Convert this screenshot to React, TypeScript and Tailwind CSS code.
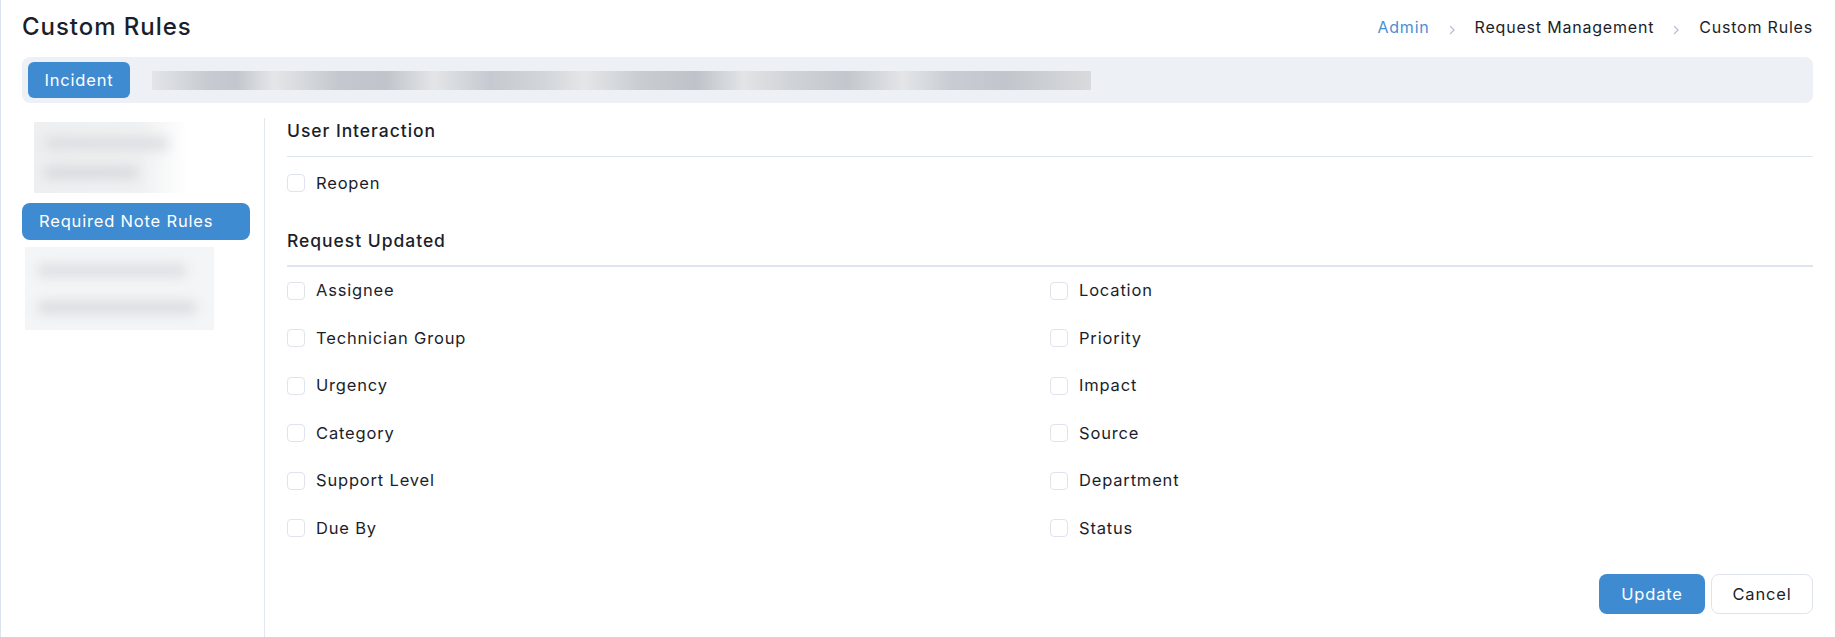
const leftFields = ['Assignee', 'Technician Group', 'Urgency', 'Category', 'Support Level', 'Due By'];
const rightFields = ['Location', 'Priority', 'Impact', 'Source', 'Department', 'Status'];

function Crumb() {
  return (
    <svg width="7" height="10" viewBox="0 0 7 10" className="mt-[7px] text-[#b7c3d4]">
      <path d="M1.5 1.5L5 5l-3.5 3.5" fill="none" stroke="currentColor" strokeWidth="1.4" strokeLinecap="round" />
    </svg>
  );
}

function Check({ label }: { label: string }) {
  return (
    <label className="flex h-[47.5px] items-center gap-[11px]">
      <span className="h-[18px] w-[18px] rounded-[4px] border border-[#dfe4ec] bg-white" />
      <span className="text-[16.5px] tracking-[0.05em] text-[#1b1e2b]">{label}</span>
    </label>
  );
}

export default function App() {
  const rows = leftFields.flatMap((l, i) => [l, rightFields[i]]);

  return (
    <div className="flex min-h-[637px] flex-col border-l border-[#dbe3ee] bg-white pl-[21px] pr-[22px] font-['Inter',sans-serif] text-[#1b1e2b]">
      {/* Header */}
      <div className="flex h-[57px] items-center justify-between pb-[4px]">
        <h1 className="text-[24px] font-medium tracking-[0.04em]">Custom Rules</h1>
        <nav className="flex items-center gap-[19px] text-[16px] tracking-[0.05em]">
          <span className="text-[#4a8fd4]">Admin</span>
          <Crumb />
          <span>Request Management</span>
          <Crumb />
          <span>Custom Rules</span>
        </nav>
      </div>

      {/* Module bar */}
      <div className="flex h-[46px] items-center gap-[22px] rounded-lg bg-[#edf0f5] px-[6px]">
        <button className="h-9 w-[102px] rounded-md bg-[#3e8bd2] text-[16.5px] tracking-[0.05em] text-white">Incident</button>
        <div className="h-[19px] w-[939px] bg-[linear-gradient(90deg,#e3e5e8_0%,#c7cbd1_6%,#c3c7cd_9%,#e4e6e9_13%,#c4c8ce_20%,#c1c5cb_25%,#e3e5e8_30%,#c6cad0_36%,#d3d6da_42%,#e4e6e9_46%,#c9cdd2_52%,#bfc3c9_58%,#e2e4e7_63%,#d0d3d7_68%,#c3c7cd_74%,#e3e5e8_80%,#c9cdd3_85%,#c2c6cc_91%,#d8dadd_100%)]" />
      </div>

      {/* Body */}
      <div className="mt-[15px] flex flex-1">
        <aside className="flex w-[243px] shrink-0 flex-col border-r border-[#e3e7ee]">
          <div className="ml-[12px] mt-[4px] flex h-[71px] w-[154px] flex-col justify-center gap-[16px] bg-[linear-gradient(90deg,#eeeff0_0%,#f0f1f2_70%,#ffffff_100%)] pl-[10px]">
            <div className="h-[13px] w-[125px] rounded-full bg-[#dcdee1] blur-[6px]" />
            <div className="h-[13px] w-[95px] rounded-full bg-[#d8dadd] blur-[6px]" />
          </div>
          <div className="mt-[10px] flex h-[37px] w-[228px] items-center rounded-lg bg-[#3e8bd2] pl-[17px] text-[16.5px] tracking-[0.05em] text-white">
            Required Note Rules
          </div>
          <div className="ml-[3px] mt-[7px] flex h-[83px] w-[189px] flex-col justify-center gap-[24px] bg-[#f4f5f6] pl-[12px]">
            <div className="h-[13px] w-[150px] rounded-full bg-[#dddfe2] blur-[6px]" />
            <div className="h-[13px] w-[160px] rounded-full bg-[#dadcdf] blur-[6px]" />
          </div>
        </aside>

        <main className="min-w-0 flex-1 pl-[22px] pt-px">
          <h2 className="border-b border-[#e0e5ec] pb-[13px] text-[17.5px] font-medium leading-[24px] tracking-[0.055em]">User Interaction</h2>
          <div className="mt-[8px] flex h-9 items-center gap-[11px]">
            <span className="h-[18px] w-[18px] rounded-[4px] border border-[#dfe4ec] bg-white" />
            <span className="text-[16.5px] tracking-[0.05em]">Reopen</span>
          </div>

          <h2 className="mt-[28px] border-b-2 border-[#dfe4ee] pb-[12px] text-[17.5px] font-medium leading-[24px] tracking-[0.055em]">Request Updated</h2>
          <div className="grid grid-cols-2">
            {rows.map((f) => (
              <Check key={f} label={f} />
            ))}
          </div>

          <div className="mt-[22px] flex justify-end gap-[6px]">
            <button className="h-10 w-[106px] rounded-lg bg-[#3e8bd2] text-[16.5px] tracking-[0.05em] text-white">Update</button>
            <button className="h-10 w-[102px] rounded-lg border border-[#dfe4ec] bg-white text-[16.5px] tracking-[0.05em]">Cancel</button>
          </div>
        </main>
      </div>
    </div>
  );
}
